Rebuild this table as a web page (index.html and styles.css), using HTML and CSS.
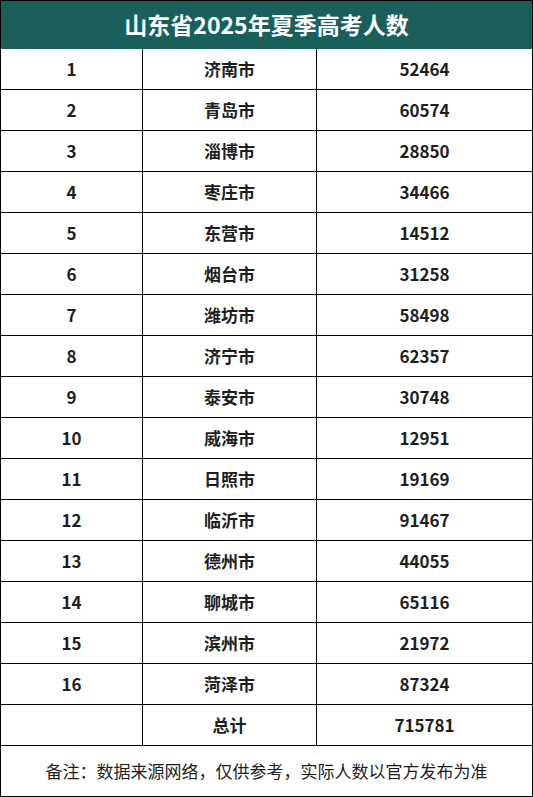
FILE: index.html
```html
<!DOCTYPE html>
<html lang="zh-CN">
<head>
<meta charset="utf-8">
<title>山东省2025年夏季高考人数</title>
<link rel="stylesheet" href="styles.css">
</head>
<body>
<div class="sheet">
  <div class="title">山东省2025年夏季高考人数</div>
  <div class="row"><div class="cell">1</div><div class="cell">济南市</div><div class="cell">52464</div></div>
  <div class="row"><div class="cell">2</div><div class="cell">青岛市</div><div class="cell">60574</div></div>
  <div class="row"><div class="cell">3</div><div class="cell">淄博市</div><div class="cell">28850</div></div>
  <div class="row"><div class="cell">4</div><div class="cell">枣庄市</div><div class="cell">34466</div></div>
  <div class="row"><div class="cell">5</div><div class="cell">东营市</div><div class="cell">14512</div></div>
  <div class="row"><div class="cell">6</div><div class="cell">烟台市</div><div class="cell">31258</div></div>
  <div class="row"><div class="cell">7</div><div class="cell">潍坊市</div><div class="cell">58498</div></div>
  <div class="row"><div class="cell">8</div><div class="cell">济宁市</div><div class="cell">62357</div></div>
  <div class="row"><div class="cell">9</div><div class="cell">泰安市</div><div class="cell">30748</div></div>
  <div class="row"><div class="cell">10</div><div class="cell">威海市</div><div class="cell">12951</div></div>
  <div class="row"><div class="cell">11</div><div class="cell">日照市</div><div class="cell">19169</div></div>
  <div class="row"><div class="cell">12</div><div class="cell">临沂市</div><div class="cell">91467</div></div>
  <div class="row"><div class="cell">13</div><div class="cell">德州市</div><div class="cell">44055</div></div>
  <div class="row"><div class="cell">14</div><div class="cell">聊城市</div><div class="cell">65116</div></div>
  <div class="row"><div class="cell">15</div><div class="cell">滨州市</div><div class="cell">21972</div></div>
  <div class="row"><div class="cell">16</div><div class="cell">菏泽市</div><div class="cell">87324</div></div>
  <div class="row"><div class="cell"></div><div class="cell">总计</div><div class="cell">715781</div></div>
  <div class="note">备注：数据来源网络，仅供参考，实际人数以官方发布为准</div>
</div>
</body>
</html>
```
FILE: styles.css
```css
html, body {
  margin: 0;
  padding: 0;
  background: #ffffff;
}
.sheet {
  width: 533px;
  height: 797px;
  box-sizing: border-box;
  border: 1px solid #000;
  font-family: "Noto Sans CJK SC", "Noto Sans", sans-serif;
  color: #1e1e1e;
  display: flex;
  flex-direction: column;
}
.title {
  height: 48px;
  flex: none;
  box-sizing: border-box;
  padding-bottom: 2px;
  background: #19605a;
  color: #fff;
  font-weight: 700;
  font-size: 23px;
  display: flex;
  align-items: center;
  justify-content: center;
}
.row {
  height: 41px;
  flex: none;
  box-sizing: border-box;
  border-bottom: 1px solid #000;
  display: grid;
  grid-template-columns: 142px 174px 1fr;
}
.cell {
  display: flex;
  align-items: center;
  justify-content: center;
  padding-bottom: 2px;
  font-weight: 700;
  font-size: 17px;
  border-right: 1px solid #000;
}
.cell:last-child {
  border-right: none;
}
.note {
  flex: 1;
  display: flex;
  align-items: center;
  justify-content: center;
  padding-bottom: 2px;
  font-size: 17px;
  font-weight: 400;
  color: #1e1e1e;
}
```
